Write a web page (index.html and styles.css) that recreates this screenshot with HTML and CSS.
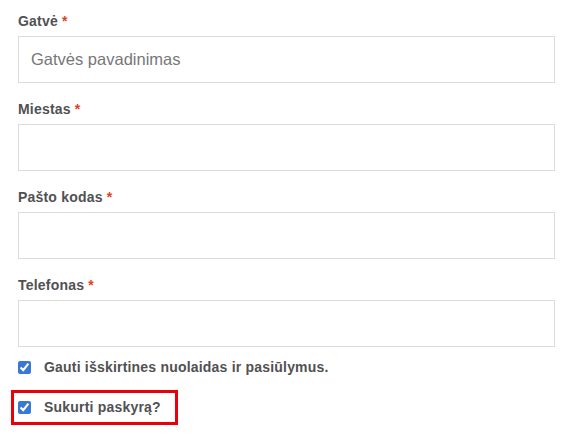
FILE: index.html
```html
<!DOCTYPE html>
<html>
	<head>
		<meta charset="UTF-8">
		<title>Pristatymas</title>
		<link rel="stylesheet" href="styles.css">
	</head>
	<body>
		<form class="checkout">
			<div class="field">
				<label class="field-label">Gatvė <abbr class="required">*</abbr></label>
				<input class="field-input" type="text" placeholder="Gatvės pavadinimas">
			</div>
			<div class="field">
				<label class="field-label">Miestas <abbr class="required">*</abbr></label>
				<input class="field-input" type="text">
			</div>
			<div class="field">
				<label class="field-label">Pašto kodas <abbr class="required">*</abbr></label>
				<input class="field-input" type="text">
			</div>
			<div class="field">
				<label class="field-label">Telefonas <abbr class="required">*</abbr></label>
				<input class="field-input" type="tel">
			</div>
			<label class="check">
				<input type="checkbox" checked>
				<span>Gauti išskirtines nuolaidas ir pasiūlymus.</span>
			</label>
			<div class="check-row">
				<label class="check check-marked">
					<input type="checkbox" checked>
					<span>Sukurti paskyrą?</span>
				</label>
			</div>
		</form>
	</body>
</html>
```
FILE: styles.css
```css
* {margin:0; padding:0; box-sizing:border-box;}
body {
	background:#fff;
	font-family:"Liberation Sans", Arial, sans-serif;
	color:#515151;
}
.checkout {
	width:571px;
	padding:11px 16px 0 18px;
}
.field {
	margin-bottom:16px;
}
.field-label {
	display:block;
	font-size:14px;
	font-weight:bold;
	letter-spacing:0.2px;
	line-height:20px;
	margin-bottom:5px;
}
.required {
	color:#e2401c;
	text-decoration:none;
	font-weight:bold;
}
.field-input {
	display:block;
	width:537px;
	height:47px;
	border:1px solid #dcdcdc;
	padding:0 12px;
	font-family:"Liberation Sans", Arial, sans-serif;
	font-size:16.5px;
	color:#333;
	outline:none;
}
.field-input::placeholder {
	color:#777;
}
.check {
	display:flex;
	align-items:center;
	font-size:14px;
	font-weight:bold;
	letter-spacing:0.2px;
	line-height:20px;
	margin-top:-6px;
}
.check input {
	width:13px;
	height:13px;
	margin:0 13px 0 0;
	accent-color:#3b78d6;
}
.check-row {
	margin-top:13px;
}
.check-marked {
	display:inline-flex;
	margin:0 0 0 -7px;
	border:3px solid #e8000b;
	padding:3px 14px 3px 4px;
	line-height:23px;
}
```
